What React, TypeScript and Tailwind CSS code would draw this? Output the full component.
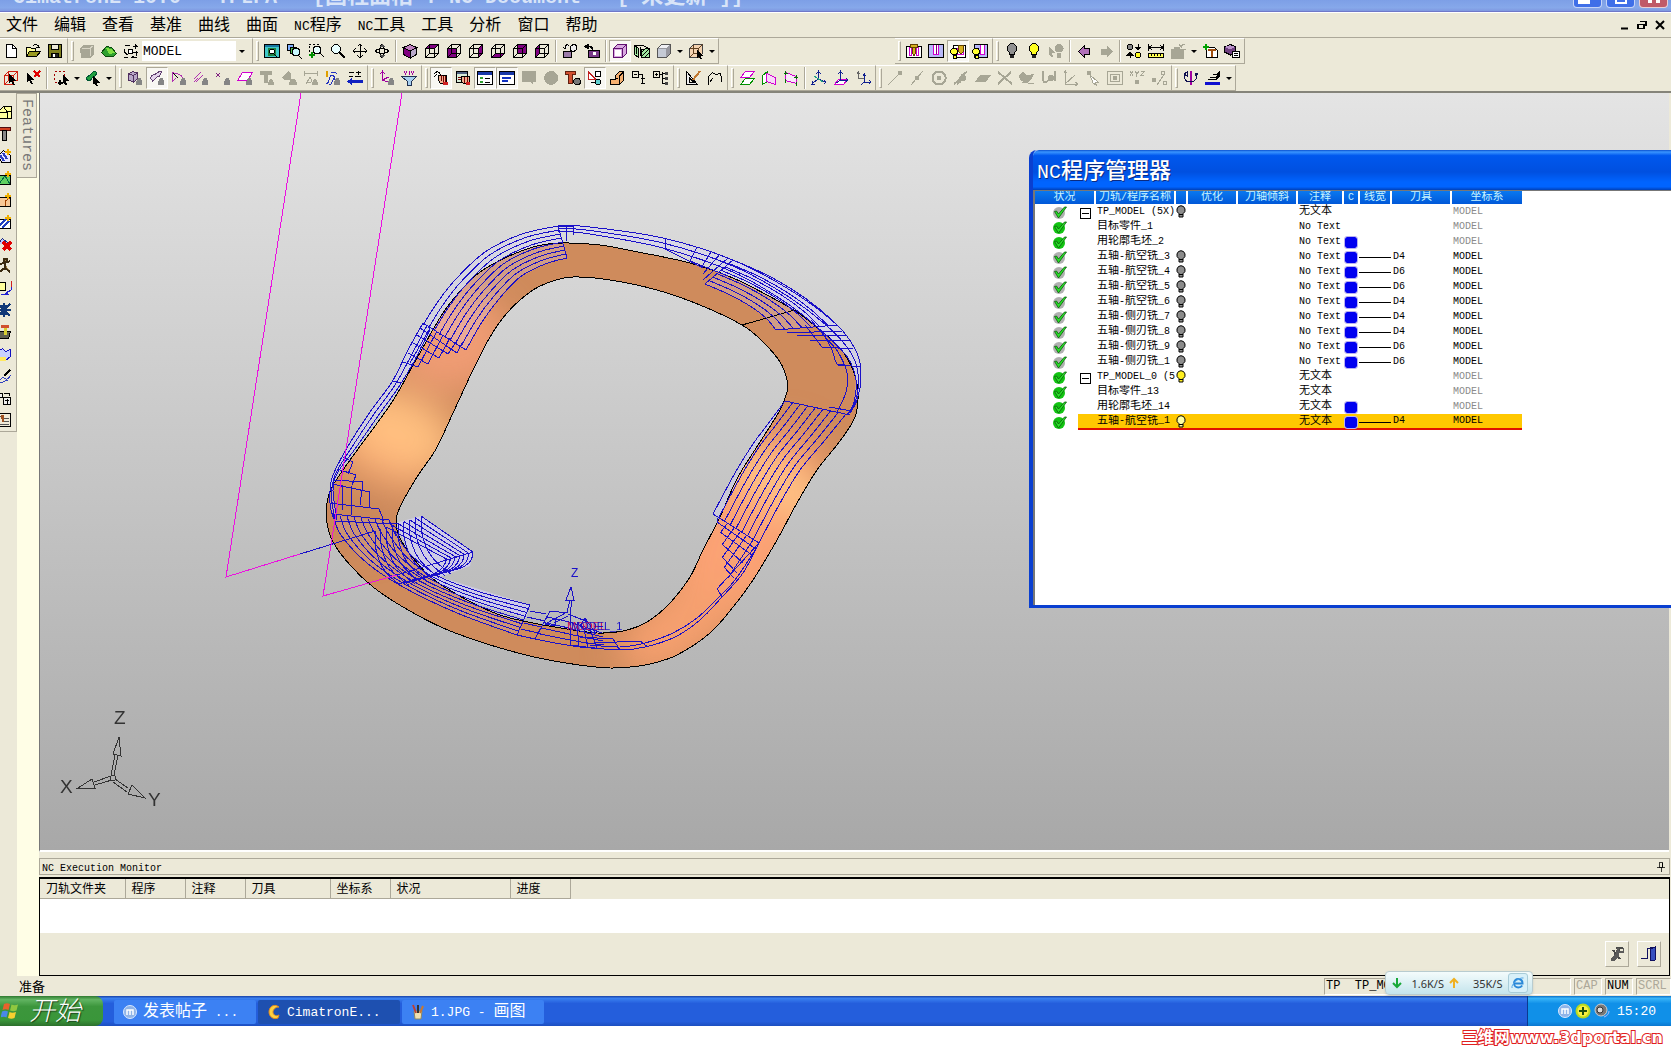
import React from "react";

type Stroke = [string, string?, string?, number?];
type Pt = [number, number];

const K = "#000";
const GR = "#a7a695";
const PU = "#800080";
const BLOB: Stroke = ["M8.500 15c0-4 2-7 4-7s3 3 3 7z", "#858585"];
const GRAYDOT: Stroke = ["M10 5a3 3 0 1 0 .1 0z", GR];

const cubeWire: Stroke = ["M1.500 5.500h9v9h-9zM5.500 1.500h9v9h-9zM1.500 5.500l4-4M10.500 5.500l4-4M10.500 14.500l4-4M1.500 14.500l4-4", undefined, K];
const bulb = (c: string): Stroke[] => [
  ["M8 .5a5 5 0 0 0-2.500 9v2h5v-2a5 5 0 0 0-2.500-9z", c, K],
  ["M6 12h4v3h-4z", "#222"],
];

const icons: Record<string, Stroke[]> = {
  new: [["M3.500 1.500h6l4 4v9h-10z", "#fff", K], ["M9.500 1.500v4h4", undefined, K]],
  open: [["M1.500 13.500v-9h4l1 1h4v3", "#ffff9c", K], ["M1.500 13.500l3-5h11l-4 5z", "#9a9a20", K], ["M8 3c1-2 5-2 5.500 1M11 4.500h4M13.500 2v2", undefined, K]],
  save: [["M1.500 1.500h13v13h-13z", "#808020", K], ["M4.500 1.500h7v5h-7z", "#ece9d8", K], ["M4.500 10.500h7v4h-7z", "#222", K], ["M6 11h2v3h-2z", "#fff"]],
  boxes: [["M1 5l4-3h10v9l-3 4h-10z", GR], ["M3 5h8v8M11 5l3-2", undefined, "#d8d5c5"]],
  part: [["M.5 9.500l5-6 5 1 5 6-3 3h-8z", "#2fa02f", "#0a4a0a"], ["M5 5l5 1 4 4-6 1z", "#7fe040"]],
  net: [["M1.500 2.500h5M12 1v5M9.500 3.500h5M1.500 6v4M1.500 9l3 3M10 9.500h5M13 8v5M1 14.500h4M8 14.500h6M12 2l3 2M9 13l3 2", undefined, K], ["M5 6.500h4v4h-4z", "#fff", K]],
  fit: [["M.5 1.500h15v13h-15z", "#40c8c8", K], ["M1 2h14v2h-14z", "#1878a0"], ["M4 5h8v8h-8z", "#208040"], ["M8 6a2.500 2.500 0 1 0 .1 0zM10 11l3 3", "#fff", K]],
  zoom3: [["M1.500 1.500h6v6h-6z", "#7fb0ff", K], ["M4.500 4.500h6v6h-6z", "#50c050", K], ["M10 5a4 4 0 1 0 .1 0zM12 12l4 4", "#c8f8ff", K]],
  zoomin: [["M1 1.500h2M5 1.500h2M9 1.500h2M1.500 3v2M1.500 7v2", undefined, K], ["M9 3a4 4 0 1 0 .1 0zM12 10l4 4", "#e8ffff", K], ["M4 9v6M1 12h6", undefined, "#009000", 2]],
  zoom: [["M6 1.500a4.500 4.500 0 1 0 .1 0z", "#e8ffff", K], ["M9 9l6 6", undefined, K, 2]],
  pan: [["M8 1v14M1 8h14M5.500 3.500L8 1l2.500 2.500M5.500 12.500L8 15l2.500-2.500M3.500 5.500L1 8l2.500 2.500M12.500 5.500L15 8l-2.500 2.500", undefined, K]],
  orbit: [["M8 1.500c3 2 3 11 0 13c-3-2-3-11 0-13zM1.500 8c2-3 11-3 13 0c-2 3-11 3-13 0z", undefined, K], ["M5 4l3-3 3 3zM5 12l3 3 3-3z", "#555"]],
  iso: [["M1.500 4.500l6.500-3 6.500 3-6.500 3.500z", "#c080c0", K], ["M1.500 4.500l6.500 3.500v7l-6.500-3.500z", PU, K], ["M8 8l6.500-3.500v7l-6.500 3.500z", "#b8a8c8", K]],
  top: [["M1.500 5.500l4-4h9l-4 4z", PU], cubeWire],
  front: [["M1.500 5.500h9v9h-9z", PU], cubeWire],
  right: [["M10.500 5.500l4-4v9l-4 4z", PU], cubeWire],
  bottom: [["M1.500 14.500l4-4h9l-4 4z", PU], cubeWire],
  back: [["M5.500 1.500h9v9h-9z", PU], cubeWire],
  left: [["M1.500 5.500l4-4v9l-4 4z", PU], cubeWire],
  heart: [["M1.500 8.500h8v6h-8z", "#9a7aa8", K], ["M3 6c0-5 3-5 4-3M3 6l-2-2M9 3l3-2 3 2-1 4-3 2-3-2z", "#eee", K]],
  camera: [["M4.500 7.500h11v7h-11z", "#7a3a8a", K], ["M9 9h3v3h-3z", "#fff"], ["M.5 3.500l4-2v4zM4 3.500c4-1 5 1 5 3", K, K]],
  shade: [["M1.500 5.500l4-4h9v9l-4 4h-9z", "#d8a8e0", "#601070"], ["M3 7h6v6h-6z", "#fff"], ["M1.500 5.500h9v9M10.500 5.500l4-4", undefined, "#601070"]],
  section: [["M.5 2.500l4 3v9l-4-3zM15.500 5.500v9h-8v-8z", "#a0e8a0", K], ["M.5 2.500h8l7 3M8 13l7-7M8 9l3-3M11 14l4-4M2 4v7M6 4v9", undefined, K]],
  solid: [["M1.500 5.500l4-4h9v9l-4 4h-9z", "#9898a0", "#555"], ["M2 6h8v8h-8z", "#c5cad5"], ["M2 5l4-3h8l-4 3z", "#f0f0f4"]],
  pickbox: [["M1.500 5.500l4-4h9v9l-4 4h-9z", "#f3d2b0", "#444"], ["M1.500 5.500h9v9M10.500 5.500l4-4M1.500 14.500l4-4v-9M5.500 10.500h4", undefined, "#604020"], ["M9 7l7 6-3 0 1 3h-2l-1-3-2 2z", K]],
  mill1: [["M.5 3.500h15v11h-15z", "#fff", K], ["M3.500 4v8h2v-8M10.500 4v8h2v-8", undefined, "#d000d0"], ["M4.500 1.500h7v3h-7zM6.500 4.500h3v6l-1.500 2-1.500-2z", "#d8b020", "#604000"]],
  mill2: [["M.5 1.500h15v13h-15z", "#b8b8f8", K], ["M5.500 2v9h5v-9", "#fff", "#d000d0"], ["M8 2v9", undefined, PU]],
  mill3: [["M3.500 2.500h12v12h-12z", "#fff", K], ["M7 5v6h6v-6", undefined, "#d000d0"], ["M8 2h5v7l-2 2-2-2z", "#d8b020", "#604000"], ["M4 5a3.500 3.500 0 1 0 .1 0zM3 12h3v3h-3z", "#ffff30", K]],
  mill4: [["M2.500 1.500h13v13h-13z", "#b8b8f8", K], ["M8 2v9h4v-9", "#fff", "#d000d0"], ["M4 5a3.500 3.500 0 1 0 .1 0zM3 12h3v3h-3z", "#ffff30", K]],
  bulboff: bulb("#909090"),
  bulbon: bulb("#ffff20"),
  bulbpick: [["M11 1a4.500 4.500 0 1 0 .1 0zM9 9h4v6h-4z", GR], ["M1 4l6 6h-3l1 4h-2l-1-3-1 1z", GR]],
  prev: [["M2.500 8.500l6-6v3h5v6h-5v3z", "#b070b8", K]],
  next: [["M14.500 8.500l-6-6v3h-6v6h6v3z", GR]],
  swap: [["M4 1a3 3 0 1 0 .1 0z", "#888", K], ["M12 9a3 3 0 1 0 .1 0z", "#ffff20", K], ["M12 1v5M9.500 4l2.500 3 2.500-3zM4 15v-5M1.500 12l2.500-3 2.500 3z", K, K]],
  measure: [["M.5 1v7M15.500 1v7M1 4.500h14M4 2l-3 2.500L4 7M12 2l3 2.500L12 7", undefined, K], ["M.5 10.500h15v4h-15z", "#ffff50", K], ["M3.500 11v2M6.500 11v2M9.500 11v2M12.500 11v2", undefined, K]],
  blob: [["M1 6h3l1-2h4l1 2h3v9h-12zM10 3l5-2M11 6l5 1M9 1l3 4", GR, GR]],
  addtool: [["M4.500 4.500h8l3 3v7h-11z", "#fff", K], ["M6 7h8M10 7v7", undefined, "#a05010", 2], ["M4 1v6M1 4h6", undefined, "#00a000", 2]],
  cubedoc: [["M.5 4l6-2.500 5 2.500v5l-5 3-6-3z", "#704080", K], ["M1 4l5 2.500 5-2.500-5-2z", "#b890c8"], ["M8.500 8.500h7v6h-7z", "#fff", K], ["M10 10.500h4M10 12.500h4", undefined, K]],
  selbox: [["M1.500 5.500h9v9h-9zM5.500 1.500h9v9h-9zM1.500 5.500l4-4M10.500 5.500l4-4M1.500 14.500l4-4", undefined, "#d02010"], ["M6 4l7 7h-3l2 4h-2l-2-4-2 2z", K]],
  selx: [["M2 3l7 7h-3l2 4h-2l-2-4-2 2z", K], ["M9 1l6 6M15 1l-6 6", undefined, "#e00000", 2]],
  marquee: [["M1.500 1.500h2M5.500 1.500h2M9.500 1.500h2M1.500 4v2M1.500 8v2M11.500 4v2M1.500 12.500h2", undefined, "#a00000"], ["M7 10v5M4.500 12.500h5", undefined, K, 2], ["M10 5l6 6h-3l1 4h-2l-1-3-1 1z", K]],
  greenpick: [["M1 9c1-4 3-2 5-5s5-3 6-1l-2 3c-3 0-3 4-6 5z", "#20a040", "#053"], ["M8 6l7 7h-3l1 3h-2l-2-3-1 1z", K]],
  hcube: [["M1.500 4l4-2.500 5 1.500v6l-4 3-5-2z", "#b8a8c8", "#503060"], ["M1.500 4l5 1.500v6M6.500 5.500l4-2.500", undefined, "#503060"], BLOB],
  hsurf: [["M1.500 8c2-5 3-2 5-4s4-3 6-2l-2 4c-3 0-4 3-7 5z", "#e4d4ec", "#604070"], BLOB],
  hcurve: [["M1.500 11.500v-9l7 2c2 1 3 3 3 5M1 12l4-4", undefined, "#b030b0"], ["M2 3l5 5", undefined, K], BLOB],
  hlines: [["M1 9l7-7M3 12l7-7M1 12l4-4", undefined, "#b030b0"], BLOB],
  hpoint: [["M1 3l4 4M5 3l-4 4", undefined, "#802080"], BLOB],
  hplane: [["M.5 10.500l5-8h10l-5 8z", "#fff", "#d000d0"], BLOB],
  gT: [["M1 1h12v4h-4v8h-4v-8h-4z", GR], ["M9 15c0-4 2-6 3-6s3 2 3 6z", GR]],
  gbox: [["M1 7l6-6 3 3v6h-7z", GR], ["M8 15c0-4 2-6 4-6s4 2 4 6z", GR]],
  gdim: [["M1.500 1v5M14.500 1v5M2 3.500h12M3 14l4-7 3 7M4 12h4", undefined, GR], ["M9 15c0-4 2-6 3-6s3 2 3 6z", GR]],
  wave: [["M2 1v6", undefined, "#e0a000", 2], ["M1 13c4 2 2-8 6-8s1 7 5 4M4 15c4 0 3-7 6-8M6 2c2 2 4-1 6 2", undefined, "#2030c0"], BLOB],
  arrowset: [["M2 2.500h5M9 2.500h5M11 1v4M2 6.500h4M8 6.500h6", undefined, K], ["M0 11.500l5-4v2.500h11v3h-11v2.500z", "#1020c0"]],
  ucs: [["M3.500 2v8l8 3M1.500 4l2-3 2 3", undefined, "#a000a0"], ["M3.500 10l6-3", undefined, "#a000a0"], BLOB],
  funnel: [["M.5 6.500h15l-5 5v4h-4v-4z", "#a8d0f0", "#203050"], ["M3 1l2 4M8 1v4M13 1l-2 4M5 1l1 2M11 1l-1 2", undefined, "#a000a0"]],
  hand1: [["M1 4c3-4 5-2 7 1M1 7l3-3", undefined, K], ["M5.500 5.500h8v8h-6l-2-3z", "#f0b090", K], ["M8 5v6M10 6v6M12 6v6", undefined, "#700"], ["M10 12h5v3h-5z", "#d02020"]],
  hand2: [["M1.500 1.500h11v11h-11z", "#d8ecd8", K], ["M2 2h10v2h-10z", "#506080"], ["M6.500 6.500h8v7h-6l-2-2z", "#f0b090", K], ["M9 7v6M12 7v6M3 7h3M3 9h3", undefined, "#700"], ["M11 12h4v3h-4z", "#d02020"]],
  listwin: [["M.5 1.500h15v13h-15z", "#fff", K], ["M1 2h14v3h-14z", "#1838a8"], ["M3 7h3v2h-3zM3 11h3v2h-3z", "#30a030"], ["M8 8h5M8 12h5", undefined, K]],
  barwin: [["M.5 1.500h15v13h-15z", "#fff", K], ["M1 2h14v3h-14z", "#1838a8"], ["M3 8h9M3 11h6", undefined, "#1030c0", 2]],
  gsq: [["M1 1h14v11h-3v3l-3-3h-8z", GR]],
  gcirc: [["M8 1a7 7 0 1 0 .1 0z", GR]],
  bolt: [["M.5 1.500h10v3h-3v9h-4v-9h-3z", "#d05030", "#602010"], ["M12 8a3.500 3.500 0 1 0 .1 0z", "#777", K]],
  shapes: [["M1.500 2v7h7z", "#fff", "#c02020"], ["M8.500 1.500h5v5h-5z", "#fff", K], ["M11 9a3 3 0 1 0 .1 0z", "#60d0d0", K], ["M4 12h4", undefined, K]],
  step: [["M1.500 9.500h5v-4l4-4h4v9l-4 4h-9z", "#f5b070", K], ["M6.500 9.500l3-2M10.500 14v-8l4-4", undefined, K]],
  collapse: [["M1.500 1.500h6v6h-6zM3 4.500h3M8 4.500h3M11.500 4v9M10 13.500h4M10 8.500h4", undefined, K]],
  expand: [["M.5 1.500h6v6h-6zM2 4.500h3M3.500 3v3M7 4.500h2M9.500 2v12M9.500 3.500h5M9.500 8.500h5M9.500 13.500h5", undefined, K], ["M12 2h3v3h-3zM12 7h3v3h-3zM12 12h3v3h-3z", "#444"]],
  sketch: [["M1.500 1.500v13h11z", "#eee", K], ["M4.500 8v4h4z", "#ece9d8", K], ["M15 1l-7 9", undefined, "#c07830", 2]],
  polyl: [["M1.500 14.500v-8l4-4 3 2 5-1 1.500 8M3 12l3-4", undefined, K]],
  pl1: [["M1.500 7.500l5-6h9l-5 6z", "#fff", "#d000d0"], ["M1.500 14.500l5-6h9l-5 6z", "#fff", "#009000"]],
  pl2: [["M1.500 5.500l5-4v10l-5 3z", "#fff", "#009000"], ["M5.500 3.500l9 4v7l-9-3z", "#f8d8f8", "#d000d0"]],
  pl3: [["M2.500 2.500l11 4v7l-11-3z", "#f8e8f8", "#d000d0"], ["M2 1v4M1 3h4M13 5v4M11 7h4M2 9v4M13 12v4", undefined, "#007000"]],
  ax1: [["M7.500 2v7l-6 4M7.500 9l7 3M5.500 4l2-3 2 3M2 11l-1 3h3M13 10l2 2-2 2", undefined, "#102090"], ["M3 6l9 6", undefined, "#20a080"]],
  ax2: [["M1.500 14.500l4-5h9l-4 5z", "#fff", "#d000d0"], ["M7.500 1v9h7M5.500 4l2-3 2 3M13 8l2 2-2 2M7.500 10l-4 3", undefined, "#102090"]],
  ax3: [["M3.500 2v6h6M2 4l1.500-2L5 4", undefined, "#666"], ["M9.500 4v8h6M8 6l1.500-2L11 6M14 10l2 2-2 2M9 12l-3 3", undefined, "#102090"]],
  g1: [["M1 15l10-10", undefined, GR], ["M11 1h4v4h-4z", GR]],
  g2: [["M2 15l12-14", undefined, GR], ["M6 6h4v4h-4z", GR]],
  g3: [["M8 1.500a6.500 6.500 0 1 0 .1 0z", undefined, GR, 2], ["M6 6h4v4h-4z", GR]],
  g4: [["M1 14l5-4 3-5 5-3M4 14l4-3", undefined, GR, 2], GRAYDOT],
  g5: [["M0 12l5-7h11l-5 7z", GR]],
  g6: [["M1 2l14 12M14 2l-13 12", undefined, GR, 2]],
  g7: [["M0 5l4-3 4 3 7-1-3 6-4 3-7-3z", GR], ["M3 12l12 2", undefined, GR]],
  g8: [["M2 1v8c0 4 4 4 5 1M14 1v10", undefined, GR, 2], GRAYDOT],
  g9: [["M2.500 1v13h12M2 14l10-9M1 3l1.500-2 1.500 2M12 12l3 2-3 2", undefined, GR]],
  g10: [["M2 1h4v4h-4z", GR], ["M5 5l8 7h-3l2 4-4-3z", "#fff", GR]],
  g11: [["M.5 1.500h15v13h-15zM3.500 4.500h9v7h-9z", undefined, GR], ["M6 6h4v4h-4z", GR]],
  g12: [["M1 1l3 5M4 1l-3 5M6 1l2 3 2-3M8 4l-1 3M12 1.500h3l-3 4h3", undefined, GR], ["M6 10h4v4h-4z", GR]],
  g13: [["M1 8h4v4h-4z", GR], ["M14 3l-8 12M10 1h3v3h-3zM12 11h3v3h-3z", undefined, GR]],
  spin: [["M7.500 1v14", undefined, "#a000a0", 2], ["M3 3c-3 3-2 9 4 9s8-5 6-8M1 4l3-2v4zM12 3l3 1-3 2z", undefined, "#101050"]],
  layers: [["M3 9.500h8l4-4M5 7.500h6l4-4M8 4.500h4l3-3", undefined, K], ["M0 12h15v3h-15z", "#1010d0"]],
  sA: [["M1.500 8.500l6-6h8v12h-14z", "#ffff9c", K], ["M8 3l3 5 4-1M2 8h9v6", undefined, K]],
  sB: [["M1.500 1.500h13v3h-13z", "#d04020", "#501010"], ["M6.500 4.500h4v10h-4z", "#888", K]],
  sC: [["M2.500 7.500l5-5 7 5v7h-9z", "#e8e8ff", K], ["M4 7l4 6M7 5l4 6", undefined, "#3040c0", 2], ["M9 4h6M12 1v6", undefined, "#f0b000", 2]],
  sD: [["M2.500 5.500h12v9h-12z", "#60d060", K], ["M3 14l6-8 5 8", undefined, "#064"], ["M9 4h6M12 1v6", undefined, "#f0b000", 2]],
  sE: [["M2.500 5.500h12v9h-12z", "#f8c898", K], ["M9 14v-5l5-3", undefined, "#a04000"], ["M9 4h6M12 1v6", undefined, "#f0b000", 2]],
  sF: [["M2.500 5.500h12v9h-12z", "#fff", K], ["M3 12l8-8M6 14l7-7", undefined, "#2040c0", 2], ["M9 4h6M12 1v6", undefined, "#f0b000", 2]],
  sG: [["M1.500 8.500l5-6 6 5", "#c0c8ff", "#203080"], ["M7 6l8 8M15 6l-8 8", undefined, "#e00000", 3]],
  sH: [["M8 1h3v3h-3zM3 6l6-1 5-2M9 5v5l5 4M9 10l-6 4", "#a08040", "#3a2a10", 2]],
  sI: [["M2.500 2.500h7v8h-7z", "#ffff9c", K], ["M9 14l6-4v-4M5 14h8M11 11v3", undefined, "#2020d0"], ["M15 1v6", undefined, "#d02020"]],
  sJ: [["M2 2l12 12M14 2l-12 12M8 1v14M1 8h14M3 4h10M3 12h10", undefined, "#103878", 2]],
  sK: [["M2.500 7.500h12l-2 7h-10z", "#606050", K], ["M5 1h8v3h-8z", "#d05030"], ["M8 4h3v7h-3z", "#d8d030"]],
  sL: [["M1.500 5.500l5-3 3 3 5-2v7l-5 4h-8z", "#c8d0ff", "#1010c0"], ["M2 11h8v4h-8z", "#ffe860"]],
  sM: [["M1 12c4 3 4-4 7-2s3 2 7-3M4 15c4 0 4-3 8-3", undefined, "#3040c0"], ["M8 8l6-6", undefined, K, 2]],
  sN: [["M1.500 3.500h5v4h-5zM7.500 7.500h7v7h-7z", "#eee", K], ["M8 3h5v3M9 10h4M11 9v5", undefined, K]],
  sO: [["M2.500 1.500h12v13h-12z", "#f0ead8", K], ["M4 4h3M8 6h5M8 9h5M4 12h9", undefined, "#555"], ["M5 3h3v7h-2z", "#a05020"]],
  pin: [["M5.500 2.500h5v6h-5zM3 8.500h10M8 9v5", undefined, K], ["M9 3h2v5h-2z", K]],
  wrench: [["M3 14l8-12M7 2l7 0M4 4l7 9", undefined, "#4a4a4a", 2], ["M8 2h2v3h4v-3h1v5h-5v3l-4 5h-4v-3l5-5z", "#5a5a5a"]],
  door: [["M9 2l5-1v13l-5 1z", "#3850c0", "#101060"], ["M6.500 12v-10h5M0 12.500h7", undefined, "#101060"]],
};

function Ico({ n, size = 16 }: { n: string; size?: number }) {
  return (
    <svg width={size} height={size} viewBox="0 0 16 16" shapeRendering="crispEdges" className="shrink-0" aria-hidden="true">
      {icons[n].map(([d, f, s, w], i) => (
        <path key={i} d={d} fill={f ?? "none"} stroke={s ?? "none"} strokeWidth={w ?? 1} />
      ))}
    </svg>
  );
}

const LATIN: Record<number, string> = {
  11: "text-[10px]",
  12: "text-[10px]",
  14: "text-[12px]",
  16: "text-[13px]",
  22: "text-[20px]",
};
const HAN: Record<number, string> = {
  11: "text-[11px]",
  12: "text-[12px]",
  14: "text-[13px]",
  16: "text-[16px]",
  22: "text-[22px]",
};

/* Half-width Latin beside full-width Han, as in a bilingual bitmap face. */
function T({ s, z = 12 }: { s: string; z?: number }) {
  const parts = s.match(/[\x20-\x7e]+|[^\x20-\x7e]+/g) ?? [];
  return (
    <>
      {parts.map((p, i) => (
        <span key={i} className={`whitespace-pre ${/[\x20-\x7e]/.test(p) ? LATIN[z] : HAN[z]}`}>
          {p}
        </span>
      ))}
    </>
  );
}

const Grip = () => (
  <span className="flex w-2 shrink-0 items-center justify-center">
    <span className="h-5 w-[3px] border border-l-white border-t-white border-r-[#aca899] border-b-[#aca899]" />
  </span>
);
const Sep = () => (
  <span className="flex w-[6px] shrink-0 justify-center">
    <span className="w-[2px] border-l border-[#aca899] border-r border-r-white" />
  </span>
);
const Caret = () => (
  <button aria-label="更多选项" className="flex w-[10px] shrink-0 items-center justify-center">
    <span className="border-x-[3px] border-t-[3px] border-x-transparent border-t-black" />
  </button>
);

function Tools({ list, grip = true }: { list: string; grip?: boolean }) {
  return (
    <div className="flex h-[26px] shrink-0 items-stretch border-r border-b border-[#aca899] border-t border-t-white py-px pr-px">
      {grip && <Grip />}
      {list.split(" ").map((n, i) => {
        if (n === "|") return <Sep key={i} />;
        if (n === "v") return <Caret key={i} />;
        if (n === "COMBO")
          return (
            <label key={i} className="relative my-px mr-[3px] flex w-[106px] items-center bg-white">
              <span className="sr-only">坐标系</span>
              <select className="h-full w-full appearance-none bg-white pl-px text-[13px] leading-none outline-none">
                <option>MODEL</option>
              </select>
              <span className="pointer-events-none absolute right-0 top-0 flex h-full w-3 items-center justify-center bg-[#ece9d8]">
                <span className="border-x-[3px] border-t-[3px] border-x-transparent border-t-black" />
              </span>
            </label>
          );
        const on = n.endsWith("*");
        const name = on ? n.slice(0, -1) : n;
        return (
          <button
            key={i}
            aria-label={name}
            className={`flex w-[22px] shrink-0 items-center justify-center ${on ? "border border-[#aca899] border-r-white border-b-white bg-[#f8f7f2]" : ""}`}
          >
            <Ico n={name} />
          </button>
        );
      })}
    </div>
  );
}

/* ---------- 3D scene ---------- */

function smooth(p: Pt[], closed = false): string {
  const n = p.length;
  const at = (i: number): Pt => (closed ? p[(i + n) % n] : p[Math.max(0, Math.min(n - 1, i))]);
  let d = `M${p[0][0]} ${p[0][1]}`;
  for (let i = 0; i < (closed ? n : n - 1); i++) {
    const [a, b, c, e] = [at(i - 1), at(i), at(i + 1), at(i + 2)];
    d += `C${b[0] + (c[0] - a[0]) / 6} ${b[1] + (c[1] - a[1]) / 6} ${c[0] - (e[0] - b[0]) / 6} ${c[1] - (e[1] - b[1]) / 6} ${c[0]} ${c[1]}`;
  }
  return closed ? d + "Z" : d;
}
const mix = (a: Pt[], b: Pt[], t: number): Pt[] => a.map((q, i) => [q[0] + (b[i][0] - q[0]) * t, q[1] + (b[i][1] - q[1]) * t]);
const family = (a: Pt[], b: Pt[], n: number) => Array.from({ length: n + 1 }, (_, i) => smooth(mix(a, b, i / n))).join("");
const band = (a: Pt[], b: Pt[]) => "M" + [...a, ...[...b].reverse()].map((q) => q.join(" ")).join("L") + "Z";
const segs = (...s: number[][]) => s.map((q) => `M${q[0]} ${q[1]}L${q[2]} ${q[3]}`).join("");

const OUTER: Pt[] = [[358, 449], [392, 402], [417, 358], [443, 313], [463, 288], [480, 272], [507, 257], [537, 246], [563, 243], [600, 245], [633, 251], [690, 263], [733, 278], [767, 295], [797, 312], [820, 330], [840, 348], [853, 370], [858, 393], [855, 417], [840, 441], [817, 470], [797, 503], [777, 540], [753, 580], [733, 607], [710, 633], [677, 655], [650, 664], [630, 667], [610, 668], [587, 666], [560, 662], [530, 656], [487, 644], [443, 628], [403, 607], [373, 587], [350, 565], [333, 542], [327, 523], [327, 503], [332, 487], [343, 470]];
const INNER: Pt[] = [[436, 449], [453, 413], [473, 370], [490, 337], [507, 313], [530, 292], [550, 282], [573, 277], [610, 280], [657, 290], [700, 305], [742, 325], [763, 342], [780, 362], [787, 380], [787, 392], [780, 410], [760, 442], [742, 470], [733, 487], [720, 517], [703, 550], [690, 577], [670, 603], [647, 622], [623, 631], [597, 633], [567, 629], [533, 623], [500, 615], [467, 600], [433, 579], [413, 558], [400, 538], [396, 523], [400, 507], [417, 477]];

const TL_A: Pt[] = [[558, 226], [522, 234], [485, 252], [455, 280], [437, 303], [423, 325]];
const TL_B: Pt[] = [[567, 258], [545, 264], [520, 277], [499, 299], [482, 322], [466, 350]];
const TOP_A: Pt[] = [[558, 225], [590, 227], [663, 238], [733, 260], [790, 290], [837, 325], [857, 353], [861, 377], [857, 400], [850, 413]];
const TOP_B: Pt[] = [[558, 231], [590, 234], [663, 248], [733, 272], [788, 304], [826, 335], [848, 358], [856, 380], [854, 402], [847, 415]];
const TR_A: Pt[] = [[733, 260], [765, 274], [793, 290], [817, 307], [837, 325]];
const TR_B: Pt[] = [[705, 284], [728, 294], [750, 306], [766, 318], [776, 330]];
const R_A: Pt[] = [[785, 401], [768, 424], [753, 444], [735, 473], [713, 514]];
const R_B: Pt[] = [[846, 414], [825, 440], [800, 470], [779, 505], [759, 543]];
const BL_A: Pt[] = [[333, 515], [341, 535], [367, 563], [403, 587], [457, 613], [517, 635]];
const BL_B: Pt[] = [[389, 521], [397, 536], [412, 556], [440, 577], [480, 592], [530, 605]];
const L_A: Pt[] = [[423, 323], [408, 350], [392, 382], [370, 412], [347, 448], [332, 478], [330, 503], [333, 517]];
const L_B: Pt[] = [[430, 330], [415, 360], [398, 388], [378, 416], [355, 449], [338, 472], [333, 490], [337, 520]];
const B_A: Pt[] = [[547, 617], [565, 621], [585, 627], [602, 633]];
const B_B: Pt[] = [[535, 639], [555, 643], [580, 647], [604, 649]];

function fan(): string {
  let d = "";
  for (let i = 0; i <= 8; i++) {
    const t = i / 8;
    const px = 375 + 46 * t;
    const py = 531 - 15 * t;
    const qx = 403 + 48 * t;
    const qy = 587 - 13 * t;
    const rx = 437 + 36 * t;
    const ry = 561 - 9 * t;
    d += `M${px} ${py}v14C${px + 4} ${py + 34} ${qx - 20} ${qy - 14} ${qx} ${qy}`;
    if (i > 1) d += `M${px} ${py}L${rx} ${ry}C${rx} ${ry + 12} ${qx + 14} ${qy - 4} ${qx - 18} ${qy}`;
  }
  return d;
}

function Scene() {
  return (
    <svg className="absolute inset-0 h-full w-full" role="img" aria-label="MODEL">
      <defs>
        <clipPath id="ring">
          <path d={smooth(OUTER, true) + smooth(INNER, true)} clipRule="evenodd" />
        </clipPath>
        <filter id="soft" x="-50%" y="-50%" width="200%" height="200%">
          <feGaussianBlur stdDeviation="18" />
        </filter>
      </defs>
      <g transform="translate(-40 -93)">
        <g clipPath="url(#ring)">
          <rect x="300" y="200" width="600" height="500" fill="#cf8b5c" />
          <g filter="url(#soft)">
            <ellipse cx="450" cy="340" rx="60" ry="50" fill="#f09c74" />
            <ellipse cx="400" cy="430" rx="60" ry="36" transform="rotate(25 400 430)" fill="#ffc080" />
            <ellipse cx="375" cy="462" rx="60" ry="12" transform="rotate(25 375 462)" fill="#fdb078" />
            <ellipse cx="350" cy="520" rx="50" ry="24" fill="#c8865a" />
            <ellipse cx="745" cy="530" rx="60" ry="110" transform="rotate(30 745 530)" fill="#fba274" />
            <ellipse cx="780" cy="485" rx="70" ry="24" transform="rotate(30 780 485)" fill="#ffc284" />
            <ellipse cx="680" cy="625" rx="70" ry="34" transform="rotate(-35 680 625)" fill="#f6a070" />
          </g>
        </g>
        <g fill="#d8d4ff" fillOpacity=".38">
          <path d={band(TL_A, TL_B)} fillOpacity=".25" />
          <path d={band(TOP_A, TOP_B)} />
          <path d={band(TR_A, TR_B)} fillOpacity=".25" />
          <path d={band(L_A, L_B)} />
          <path d={band(BL_A, BL_B)} fillOpacity=".15" />
          <path d="M785 401L753 444 713 514 720 518 742 470 780 410Z" />
          <path d="M395 523L421 516 473 552 470 566 440 577 412 556Z" fillOpacity=".6" />
          <path d="M412 556L440 577 530 605 526 618 467 600 433 579Z" fillOpacity=".6" />
        </g>
        <g fill="none" strokeWidth="1" shapeRendering="crispEdges">
          <path d={smooth(OUTER, true) + smooth(INNER, true) + segs([742, 325, 795, 310])} stroke="#000" />
          <g stroke="#1a10c8">
            <path d={family(TL_A, TL_B, 8) + segs([558, 226, 567, 258], [558, 226, 573, 226], [573, 226, 573, 235], [566, 226, 566, 241])} />
            <path d={segs([423, 323, 466, 350], [420, 328, 457, 353], [417, 335, 448, 354], [413, 343, 439, 358], [408, 353, 428, 364], [403, 362, 418, 367], [392, 381, 402, 383], [457, 353, 462, 343], [448, 354, 456, 342], [439, 358, 450, 338], [428, 364, 443, 335], [418, 367, 437, 331], [410, 363, 430, 328])} />
            <path d={family(L_A, L_B, 2)} />
            <path d={family(TOP_A, TOP_B, 2)} />
            <path d={family(TR_A, TR_B, 7) + segs([665, 238, 665, 249], [697, 247, 690, 261], [711, 252, 701, 268], [720, 254, 703, 274], [728, 258, 703, 280], [733, 260, 705, 284], [665, 249, 703, 268], [690, 261, 728, 276])} />
            <path d={segs([776, 330, 837, 325], [787, 333, 842, 331], [797, 335, 846, 335], [810, 340, 849, 340], [822, 347, 853, 349], [837, 364, 860, 367], [785, 401, 850, 415], [829, 407, 852, 411])} />
            <path d={smooth([[811, 320], [826, 338], [838, 352], [847, 373], [846, 392], [837, 412]]) + smooth([[805, 325], [822, 347]]) + smooth([[822, 331], [832, 350], [837, 364], [846, 366]])} />
            <path d={family(R_A, R_B, 8)} />
            <path d={segs([713, 514, 759, 543], [717, 522, 756, 549], [720, 532, 752, 555], [722, 544, 743, 563], [722, 557, 737, 573], [724, 567, 734, 578], [717, 588, 722, 597], [718, 518, 717, 522], [727, 524, 720, 533], [734, 528, 722, 545], [740, 532, 722, 558], [746, 536, 724, 568], [753, 540, 728, 578], [759, 543, 717, 589])} />
            <path d={smooth([[759, 543], [743, 573], [722, 597], [700, 620], [675, 637], [645, 647], [620, 650], [595, 648], [570, 645]]) + smooth([[756, 549], [735, 580], [718, 598], [697, 618], [673, 633], [645, 643], [620, 647], [590, 645]])} />
            <path d={family(BL_A, BL_B, 8)} />
            <path d={segs([343, 457, 353, 462], [337, 469, 356, 475], [334, 480, 363, 482], [332, 484, 370, 492], [330, 503, 379, 509], [332, 514, 389, 520], [335, 521, 398, 524], [353, 462, 348, 474], [356, 475, 352, 485], [363, 482, 360, 505], [370, 492, 369, 507], [379, 509, 384, 521], [351, 486, 351, 515], [342, 485, 342, 510], [389, 520, 396, 536])} />
            <path d={fan()} />
            <path d={segs([530, 605, 517, 635], [517, 635, 535, 639], [550, 611, 535, 639], [550, 611, 568, 613], [530, 611, 546, 614], [527, 617, 545, 621], [524, 623, 541, 627], [521, 629, 538, 633], [300, 554, 375, 531], [397, 575, 473, 552])} />
            <path d={family(B_A, B_B, 4) + segs([570, 614, 570, 646], [577, 622, 579, 647], [583, 625, 588, 648], [590, 628, 597, 649], [613, 639, 620, 650], [640, 641, 648, 647], [580, 637, 613, 639], [595, 643, 640, 641])} />
            <path d="M567 612L570 600M570 614L572 600M566 600L571 587 574 600ZM567 612L553 620M568 616L554 623M556 618L545 624 555 626ZM568 614L588 622M585 618L596 634 580 626Z" />
          </g>
          <path d="M301 93L226 577 300 554M402 93L323 596 397 575" stroke="#ec10e0" />
          <path d="M111 775L115 755M114 775L118 755M113 754L119 737 121 756ZM111 776L94 782M112 780L95 785M92 779L78 788 95 788ZM115 779L128 788M113 782L127 792M132 785L145 798 128 794ZM113 775a3 3 0 1 0 .1 0z" stroke="#333" />
        </g>
        <g fontFamily="Liberation Sans, sans-serif">
          <g fontSize="19" fill="#333">
            <text x="114" y="724">Z</text>
            <text x="60" y="793">X</text>
            <text x="148" y="806">Y</text>
          </g>
          <g>
            <text x="571" y="577" fontSize="12" fill="#1a10c8">Z</text>
            <text x="567" y="630" fontSize="11" fill="#d01050">MODEL</text>
            <text x="571" y="630" fontSize="11" fill="#1a10c8">MODEL_1</text>
          </g>
        </g>
      </g>
    </svg>
  );
}

/* ---------- NC manager ---------- */

type Row = { n: string; g?: boolean; ok?: boolean; b?: "off" | "on" | "clear"; c: string; k?: boolean; d?: string; dim?: boolean; sel?: boolean };
const nt = "No Text";
const wt = "无文本";
const ROWS: Row[] = [
  { n: "TP_MODEL (5X)", g: true, b: "off", c: wt, dim: true },
  { n: "目标零件_1", ok: true, c: nt, dim: true },
  { n: "用轮廓毛坯_2", ok: true, c: nt, k: true, dim: true },
  { n: "五轴-航空铣_3", b: "off", c: nt, k: true, d: "D4" },
  { n: "五轴-航空铣_4", b: "off", c: nt, k: true, d: "D6" },
  { n: "五轴-航空铣_5", b: "off", c: nt, k: true, d: "D6" },
  { n: "五轴-航空铣_6", b: "off", c: nt, k: true, d: "D4" },
  { n: "五轴-侧刃铣_7", b: "off", c: nt, k: true, d: "D4" },
  { n: "五轴-侧刃铣_8", b: "off", c: nt, k: true, d: "D4" },
  { n: "五轴-侧刃铣_9", b: "off", c: nt, k: true, d: "D6" },
  { n: "五轴-侧刃铣_1", b: "off", c: nt, k: true, d: "D6" },
  { n: "TP_MODEL_0 (5", g: true, ok: true, b: "on", c: wt, dim: true },
  { n: "目标零件_13", ok: true, c: wt, dim: true },
  { n: "用轮廓毛坯_14", ok: true, c: wt, k: true, dim: true },
  { n: "五轴-航空铣_1", ok: true, b: "clear", c: wt, k: true, d: "D4", sel: true },
];
const BULB = { off: "#8c8c8c", on: "#ffef20", clear: "#ffffa0" };
const HEADS: [string, number][] = [["状况", 2], ["刀轨/程序名称", 1], ["", 1], ["优化", 1], ["刀轴倾斜", 1], ["注释", 1], ["C", 1], ["线宽", 1], ["刀具", 1], ["坐标系", 1]];

function Manager() {
  return (
    <section className="absolute top-[57px] -right-[2px] flex h-[458px] w-[642px] flex-col rounded-tl-lg border-b-[3px] border-l-[4px] border-[#0a3fd0] bg-white">
      <h2 className="flex h-10 shrink-0 items-center rounded-tl-md bg-[linear-gradient(#0a50d0_0%,#3a95ff_5%,#0058ee_14%,#0050e0_55%,#0064ff_80%,#0064ff_92%,#0040b8_100%)] pt-[6px] pl-1 leading-none font-medium text-white [text-shadow:1px_1px_0_#0a2a80]">
        <T s="NC程序管理器" z={22} />
      </h2>
      <div className="flex-1 border-l-2 border-t border-[#777]">
        <table className="w-[487px] table-fixed border-collapse text-left leading-none">
          <colgroup>
            <col className="w-[43px]" /><col className="w-[17px]" /><col className="w-[80px]" /><col className="w-[12px]" /><col className="w-[50px]" /><col className="w-[60px]" /><col className="w-[46px]" /><col className="w-[16px]" /><col className="w-[32px]" /><col className="w-[60px]" /><col className="w-[71px]" />
          </colgroup>
          <thead>
            <tr className="h-[13px] bg-[linear-gradient(#0a78f0,#0058d8)] text-[#c8f4ff]">
              {HEADS.map(([h, span], i) => (
                <th key={i} colSpan={span} className="h-[13px] overflow-hidden border-r-2 border-white p-0 text-center font-normal whitespace-nowrap last:border-r-0">
                  <div className="flex h-[13px] items-center justify-center"><T s={h} z={11} /></div>
                </th>
              ))}
            </tr>
          </thead>
          <tbody>
            {ROWS.map((r, i) => {
              const hl = r.sel ? "border-b-2 border-[#e01000] bg-[#ffc800]" : "";
              return (
                <tr key={i} className="h-[15px]">
                  <td className="p-0">
                    <div className="flex h-[15px] items-center justify-center pl-[6px] pt-px">
                      <svg width="16" height="14" viewBox="0 0 16 14" aria-hidden="true">
                        <circle cx="7" cy="8" r="6" fill={r.ok ? "#12c412" : "#b0b0b0"} />
                        <path d="M2.500 6.500l2-.5 2 3 6-7h2l-8 11z" fill="#28e028" stroke="#0a5a0a" strokeWidth=".8" />
                      </svg>
                    </div>
                  </td>
                  <td className={`p-0 ${hl}`}>
                    {r.g && <button aria-label="折叠" className="mt-[3px] ml-[2px] flex h-[11px] w-[11px] items-center justify-center border border-black bg-white"><span className="h-px w-[7px] bg-black" /></button>}
                  </td>
                  <td className={`p-0 pl-[2px] ${hl}`}><div className="flex h-[13px] items-center overflow-hidden leading-none"><T s={r.n} z={11} /></div></td>
                  <td className={`p-0 ${hl}`}>
                    {r.b && (
                      <svg width="12" height="13" viewBox="0 0 12 13" className="block" aria-hidden="true">
                        <path d="M6 .7a4.300 4.300 0 0 0-2 8v3.300h4v-3.300a4.300 4.300 0 0 0-2-8z" fill={BULB[r.b]} stroke="#000" />
                        <path d="M4 9.500h4" stroke="#000" />
                      </svg>
                    )}
                  </td>
                  <td className={`p-0 ${hl}`} />
                  <td className={`p-0 ${hl}`} />
                  <td className={`p-0 pl-[2px] whitespace-nowrap ${hl}`}><div className="flex h-[13px] items-center"><T s={r.c} z={11} /></div></td>
                  <td className={`p-0 ${hl}`}>{r.k && <span className="mx-auto mt-[2px] block h-[11px] w-3 rounded-[2px] bg-[#0000f0] outline outline-[#b8b0f0]" />}</td>
                  <td className={`p-0 ${hl}`}>{r.d && <span className="mt-[2px] block h-px w-full bg-black" />}</td>
                  <td className={`p-0 pl-[2px] ${hl}`}><div className="flex h-[13px] items-center"><T s={r.d ?? ""} /></div></td>
                  <td className={`p-0 pl-[2px] ${r.dim ? "text-[#8a8a8a]" : ""} ${hl}`}><div className="flex h-[13px] items-center"><T s="MODEL" /></div></td>
                </tr>
              );
            })}
          </tbody>
        </table>
      </div>
    </section>
  );
}

const MENU = ["文件", "编辑", "查看", "基准", "曲线", "曲面", "NC程序", "NC工具", "工具", "分析", "窗口", "帮助"];
const SIDE = "sA sB sC sD sE sF sG sH sI sJ sK sL sM sN sO".split(" ");

function Monitor() {
  return (
    <section className="shrink-0 pt-[6px]">
      <header className="flex h-[17px] items-center justify-between border border-[#aca899] px-[2px] leading-none">
        <h3><T s="NC Execution Monitor" /></h3>
        <button aria-label="固定"><Ico n="pin" size={12} /></button>
      </header>
      <div className="mt-[2px] flex h-[99px] flex-col border border-t-2 border-black">
        <div className="flex-1 bg-white">
          <div className="bg-[#ece9d8]">
            <table className="w-[530px] table-fixed border-collapse text-left leading-none">
              <colgroup>
                <col className="w-[85px]" /><col className="w-[60px]" /><col className="w-[60px]" /><col className="w-[85px]" /><col className="w-[60px]" /><col className="w-[120px]" /><col className="w-[60px]" />
              </colgroup>
              <thead>
                <tr className="h-[19px]">
                  {["刀轨文件夹", "程序", "注释", "刀具", "坐标系", "状况", "进度"].map((h) => (
                    <th key={h} className="border-r border-b border-[#aca899] p-0 pt-px pl-[6px] font-normal whitespace-nowrap"><T s={h} /></th>
                  ))}
                </tr>
              </thead>
            </table>
          </div>
        </div>
        <div className="flex h-[42px] items-center justify-end gap-2 bg-[#ece9d8] pr-2">
          <button aria-label="设置" className="flex h-[26px] w-6 items-center justify-center border border-white border-r-[#aca899] border-b-[#aca899]"><Ico n="wrench" /></button>
          <button aria-label="退出" className="flex h-[26px] w-6 items-center justify-center border border-white border-r-[#aca899] border-b-[#aca899]"><Ico n="door" /></button>
        </div>
      </div>
    </section>
  );
}

const cell = "flex h-[17px] items-center border border-[#aca899] border-r-white border-b-white pl-px whitespace-pre";
const task = "flex h-[24px] w-[142px] items-center gap-[6px] rounded-[2px] pl-[9px] text-left leading-none";

function Maxthon() {
  return (
    <svg width="14" height="14" viewBox="0 0 14 14" aria-hidden="true">
      <circle cx="7" cy="7" r="6.500" fill="#8fb4e8" stroke="#d8e8ff" />
      <path d="M4 10V5h6v5M7 5v5" fill="none" stroke="#fff" strokeWidth="1.500" />
    </svg>
  );
}

export default function App() {
  return (
    <div className="flex min-h-screen flex-col bg-white pr-[9px] font-['Liberation_Mono','Noto_Sans_CJK_SC',monospace] text-black">
      <header className="flex h-3 shrink-0 items-start justify-between overflow-hidden border-b border-[#7078c8] bg-[linear-gradient(#7d9fe6,#86a8ea_70%,#7f98e0)] pr-[3px]">
        <h1 className="-mt-[15px] ml-[13px] h-[26px] leading-[26px] font-bold whitespace-nowrap text-[#d8e4f8]"><T s="CimatronE 10.0 - TPLFA - [固柱曲柏 : NC Document - [ 未更新 ]]" z={22} /></h1>
        <div className="flex gap-1">
          <button aria-label="最小化窗口" className="flex h-2 w-[29px] items-start rounded-b border border-t-0 border-white/70 bg-[#3f6fe8] pl-1"><span className="h-1 w-3 bg-white" /></button>
          <button aria-label="还原窗口" className="flex h-2 w-[29px] items-start justify-center rounded-b border border-t-0 border-white/70 bg-[#3f6fe8]"><span className="h-1 w-3 border-2 border-t-0 border-white" /></button>
          <button aria-label="关闭窗口" className="flex h-2 w-[29px] items-start justify-center gap-1 rounded-b border border-t-0 border-white/70 bg-[#c05a68]"><span className="h-[3px] w-1 bg-white" /><span className="h-[3px] w-1 bg-white" /></button>
        </div>
      </header>

      <div className="flex flex-1 flex-col bg-[#ece9d8]">
        <nav className="flex h-[26px] shrink-0 items-center justify-between border-t border-white border-b border-b-[#aca899] pr-[6px] pl-[6px] leading-none">
          <div className="flex gap-4 pt-[2px]">
            {MENU.map((m) => (
              <button key={m} className="leading-none"><T s={m} z={16} /></button>
            ))}
          </div>
          <div className="flex gap-2">
            <button aria-label="最小化"><svg width="9" height="10" aria-hidden="true"><path d="M1 8.500h7" stroke="#000" strokeWidth="2" /></svg></button>
            <button aria-label="还原"><svg width="10" height="10" shapeRendering="crispEdges" aria-hidden="true"><path d="M3 1.500h6v4M1 4.500h6v4h-6z" fill="none" stroke="#000" strokeWidth="1.500" /></svg></button>
            <button aria-label="关闭"><svg width="10" height="10" aria-hidden="true"><path d="M1 1l8 8M9 1l-8 8" stroke="#000" strokeWidth="2" /></svg></button>
          </div>
        </nav>

        <div className="flex shrink-0">
          <Tools grip={false} list="new open save" />
          <Tools list="boxes part net COMBO" />
          <Tools list="fit zoom3 zoomin zoom pan orbit | iso top front right bottom back left | heart camera | shade* section solid v pickbox v" />
          <div className="w-[176px] shrink-0" />
          <Tools list="mill1 mill2 mill3* mill4" />
          <Tools list="bulboff bulbon bulbpick | prev next | swap measure blob v addtool cubedoc" />
        </div>
        <div className="flex h-[29px] shrink-0 border-b-2 border-[#85847a] pt-px">
          <Tools grip={false} list="selbox selx | marquee v greenpick v" />
          <Tools list="hcube hsurf* hcurve hlines hpoint hplane gT gbox gdim wave arrowset" />
          <Tools list="ucs funnel" />
          <Tools list="hand1* hand2 listwin* barwin* gsq gcirc bolt shapes* step collapse expand" />
          <Tools list="sketch polyl" />
          <Tools list="pl1 pl2 pl3 | ax1 ax2 ax3" />
          <Tools list="g1 g2 g3 g4 g5 g6 g7 g8 g9 g10 g11 g12 g13" />
          <Tools list="spin layers v" />
        </div>

        <div className="flex flex-1">
          <aside className="w-[17px] shrink-0">
            <div className="flex flex-col overflow-hidden border-r border-b border-[#aca899] pt-2">
              {SIDE.map((n) => (
                <button key={n} aria-label={n} className="-ml-1 flex h-[22px] w-4 items-center"><Ico n={n} /></button>
              ))}
            </div>
          </aside>
          <aside className="w-[22px] shrink-0 bg-[#fffee6]">
            <button className="flex h-[85px] w-5 items-center justify-start border border-l-0 border-[#aca899] bg-[#ece9d8] pt-[5px] text-[15px] leading-none text-[#777] [writing-mode:vertical-rl]">Features</button>
          </aside>
          <main className="flex min-w-0 flex-1 flex-col pr-px">
            <div className="relative mr-px flex-1 border-b-2 border-l border-[#777] border-b-white bg-[linear-gradient(#e4e4e4,#a8a8a8)]">
              <Scene />
              <Manager />
            </div>
            <Monitor />
          </main>
        </div>

        <footer className="relative flex h-5 shrink-0 items-center justify-between pl-[19px] leading-none">
          <span className="pt-px"><T s="准备" z={14} /></span>
          <div className="flex gap-[3px]">
            <span className={`${cell} w-[247px]`}><T s="TP  TP_MODEL" z={14} /></span>
            <span className={`${cell} w-7 text-[#aca899]`}><T s="CAP" z={14} /></span>
            <span className={`${cell} w-7`}><T s="NUM" z={14} /></span>
            <span className={`${cell} w-[35px] text-[#aca899]`}><T s="SCRL" z={14} /></span>
          </div>
          <div className="absolute right-[138px] bottom-px z-10 flex h-6 w-[148px] items-center justify-between rounded-[4px] border border-[#b8ccd0] bg-[linear-gradient(#f4fcfc,#c4e4ec)] pr-1 pl-[6px] font-['Noto_Sans',sans-serif] text-[11px] leading-none text-[#333] shadow">
            <svg width="10" height="12" aria-hidden="true"><path d="M5 1v8M1 6l4 4 4-4" fill="none" stroke="#18a838" strokeWidth="2" /></svg>
            <span className="pl-1">1.6K/S</span>
            <svg width="10" height="12" aria-hidden="true"><path d="M5 11v-8M1 6l4-4 4 4" fill="none" stroke="#f0b020" strokeWidth="2" /></svg>
            <span className="pl-2">35K/S</span>
            <button aria-label="浏览器" className="flex h-5 w-5 items-center justify-center rounded-[3px] border border-[#a8ccd8] bg-[#d8f0f8]">
              <svg width="14" height="14" viewBox="0 0 14 14" aria-hidden="true"><path d="M3 7.500h8.500c0-3-2-4.500-4.300-4.500S3 4.700 3 7.300s2 4.200 4.300 4.200c1.700 0 3-.6 3.900-2" fill="none" stroke="#2a88d8" strokeWidth="2" /><path d="M1 12C0 8 8 1 12.500 2" fill="none" stroke="#58a8e8" /></svg>
            </button>
          </div>
        </footer>
      </div>

      <footer className="flex h-[30px] shrink-0 items-stretch bg-[linear-gradient(#1941a5_0%,#3a80f0_8%,#245edc_25%,#245edc_85%,#1c4fc0_100%)] leading-none text-white">
        <button className="flex w-[103px] items-center gap-2 rounded-r-lg bg-[linear-gradient(#2f7a30_0%,#62b462_12%,#3c963c_35%,#3a963a_80%,#2c702c_100%)] pl-px">
          <svg width="20" height="20" viewBox="0 0 20 20" aria-hidden="true">
            <path d="M3 3c2-1 4-1 6 0l-1.500 6c-2-1-4-1-6 0z" fill="#e8622c" />
            <path d="M10.500 3.500c2 1 4 1 6.500 0l-1.500 6c-2 1-4 1-6.500 0z" fill="#90c840" />
            <path d="M1 10.500c2-1 4-1 6 0l-1.500 6c-2-1-4-1-6 0z" fill="#4a88e8" />
            <path d="M8.500 11c2 1 4 1 6.500 0l-1.500 6c-2 1-4 1-6.500 0z" fill="#f8d030" />
          </svg>
          <span className="pt-1 text-[26px] leading-none font-light italic [text-shadow:1px_1px_1px_#1a401a]">开始</span>
        </button>
        <div className="ml-[11px] flex items-center gap-[2px] pt-px">
          <button className={`${task} bg-[#3c81f3]`}><Maxthon /><span><T s="发表帖子 ..." z={16} /></span></button>
          <button className={`${task} bg-[#1e50b0]`}>
            <svg width="14" height="16" viewBox="0 0 14 16" aria-hidden="true"><path d="M12 3C7-1 2 3 2 8s5 8 9 6l1-3C8 13 6 10 6 8s2-5 6-5z" fill="#ffd040" stroke="#e08820" /></svg>
            <span><T s="CimatronE..." z={16} /></span>
          </button>
          <button className={`${task} bg-[#3c81f3]`}>
            <svg width="14" height="16" viewBox="0 0 14 16" aria-hidden="true"><path d="M3 7h8l-1 8H4z" fill="#f0e0b0" stroke="#886" /><path d="M2 1l3 8" stroke="#c04030" strokeWidth="2" /><path d="M7 1v8" stroke="#333" strokeWidth="2" /><path d="M12 2l-3 7" stroke="#c87830" strokeWidth="2" /></svg>
            <span><T s="1.JPG - 画图" z={16} /></span>
          </button>
        </div>
        <div className="ml-auto flex w-[144px] items-center justify-end gap-[3px] border-l border-[#0a3a90] bg-[linear-gradient(#0c70c8_0%,#38b4f8_8%,#1090e8_25%,#1090e8_85%,#0c78d0_100%)] pr-[15px]">
          <Maxthon />
          <svg width="16" height="16" viewBox="0 0 16 16" aria-hidden="true"><circle cx="8" cy="8" r="7.500" fill="#b8d820" /><circle cx="8" cy="8" r="5.500" fill="#f8f040" /><path d="M8 4v8M4 8h8" stroke="#205010" strokeWidth="2" /></svg>
          <svg width="16" height="16" viewBox="0 0 16 16" aria-hidden="true"><circle cx="7" cy="7" r="6" fill="#777" stroke="#ccc" /><circle cx="6" cy="7" r="3" fill="#ddd" stroke="#333" /><path d="M10 14c3-1 5-3 5-6" fill="none" stroke="#a8b8ff" /></svg>
          <time className="pl-1"><T s="15:20" z={16} /></time>
        </div>
      </footer>
      <p className="flex h-6 shrink-0 items-center justify-end pr-2 font-['DejaVu_Sans','Noto_Sans_CJK_SC',sans-serif] text-[16px] leading-none font-bold text-white [-webkit-text-stroke:2px_#e02020] [paint-order:stroke_fill]">
        三维网www.3dportal.cn
      </p>
    </div>
  );
}
